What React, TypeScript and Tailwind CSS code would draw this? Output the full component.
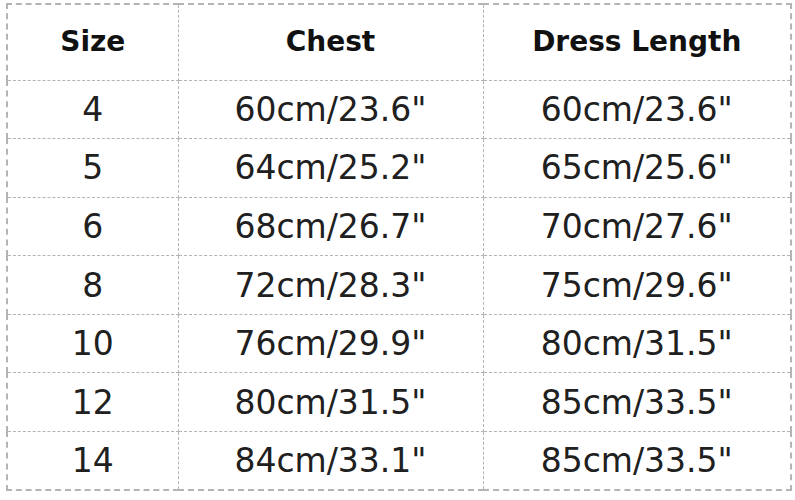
const rows = [
  ["4", "60cm/23.6\"", "60cm/23.6\""],
  ["5", "64cm/25.2\"", "65cm/25.6\""],
  ["6", "68cm/26.7\"", "70cm/27.6\""],
  ["8", "72cm/28.3\"", "75cm/29.6\""],
  ["10", "76cm/29.9\"", "80cm/31.5\""],
  ["12", "80cm/31.5\"", "85cm/33.5\""],
  ["14", "84cm/33.1\"", "85cm/33.5\""],
];

export default function App() {
  return (
    <div className="w-[795px] h-[500px] bg-white pt-[3px] pl-[6px] font-['DejaVu_Sans',Verdana,sans-serif] text-[#202020]">
      <table className="border-collapse border-2 border-dashed border-[#b4b4b4] table-fixed">
        <thead>
          <tr className="h-[76px] text-[28px] font-bold text-[#111]">
            <th className="w-[171px] border border-dashed border-[#b4b4b4] text-center">Size</th>
            <th className="w-[305px] border border-dashed border-[#b4b4b4] text-center">Chest</th>
            <th className="w-[308px] border border-dashed border-[#b4b4b4] text-center">Dress Length</th>
          </tr>
        </thead>
        <tbody>
          {rows.map((r) => (
            <tr key={r[0]} className="h-[58.6px] text-[33px] leading-none">
              {r.map((c, i) => (
                <td key={i} className="border border-dashed border-[#b4b4b4] text-center">
                  {c}
                </td>
              ))}
            </tr>
          ))}
        </tbody>
      </table>
    </div>
  );
}
